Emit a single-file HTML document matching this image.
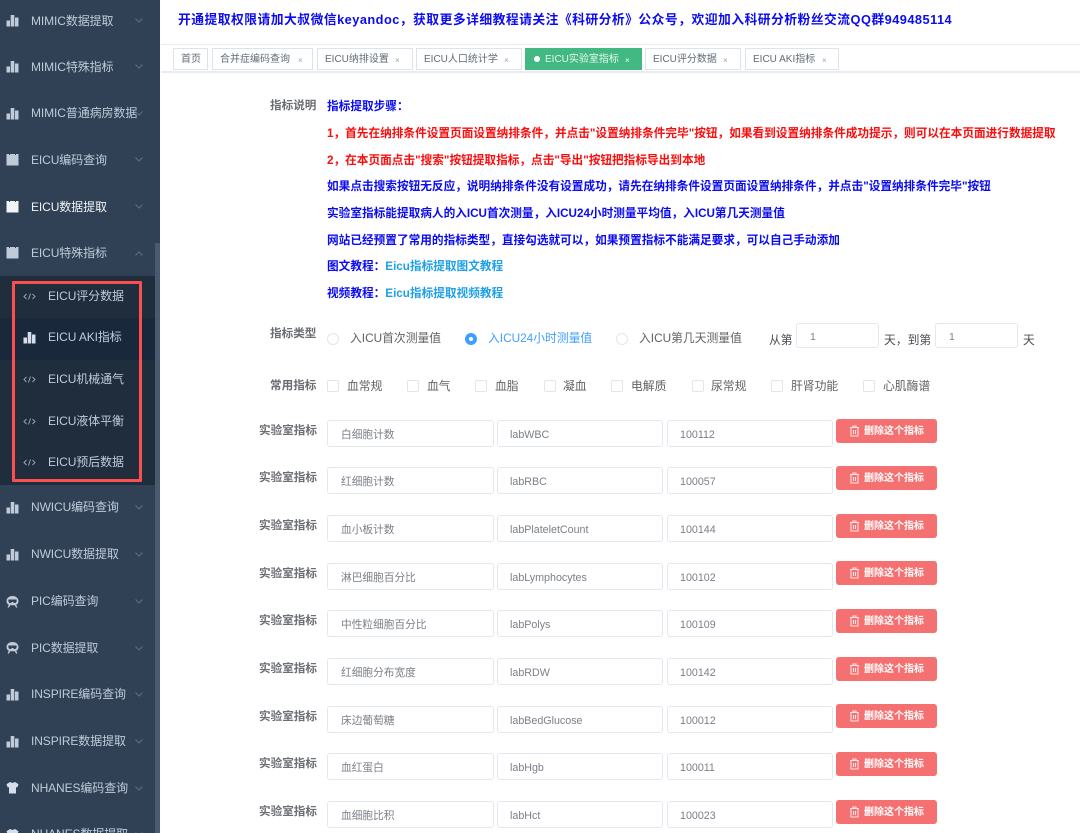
<!DOCTYPE html>
<html><head><meta charset="utf-8">
<style>
*{box-sizing:border-box;margin:0;padding:0}
html,body{width:1080px;height:833px;overflow:hidden;background:#fff;font-family:"Liberation Sans","Noto Sans CJK SC",sans-serif}
.a{position:absolute;white-space:nowrap}
#side{position:absolute;left:0;top:0;width:160px;height:833px;background:#304156;overflow:hidden}
#sub{position:absolute;left:0;top:276px;width:155px;height:209px;background:#1f2d3d}
#akirow{position:absolute;left:0;top:318px;width:155px;height:42px;background:#19283a}
#bar{position:absolute;left:155px;top:243px;width:5px;height:590px;background:#4a5a6e}
.m{position:absolute;left:31px;height:20px;line-height:20px;font-size:12px;color:#bfcbd9;white-space:nowrap;letter-spacing:-.1px}
.s{position:absolute;left:48px;height:20px;line-height:20px;font-size:12px;color:#bfcbd9;white-space:nowrap;letter-spacing:-.1px}
.ic{position:absolute;left:6px;width:13px;height:13px}
.ics{position:absolute;left:23px;width:13px;height:13px}
.ch{position:absolute;left:135px;width:8px;height:5px}
.tag{position:absolute;top:48px;height:22px;border:1px solid #dde3ec;background:#fff;color:#5f6b7a;font-size:10px;line-height:22px;white-space:nowrap;padding-left:7px}
.tag i{position:absolute;top:1px;font-style:normal;font-size:8px;color:#9aa3ad}
.lb{position:absolute;font-size:11.6px;font-weight:bold;color:#6b6e73;white-space:nowrap;height:16px;line-height:16px}
.l{position:absolute;left:327px;font-size:11.67px;font-weight:bold;white-space:nowrap;height:18px;line-height:18px}
.b{color:#0b0bf0}.r{color:#f90d0d}.k{color:#1e9fe8}
.in{position:absolute;height:27px;border:1px solid #e4e7ed;border-radius:3px;background:#fff;color:#7a7f87;font-size:10.7px;line-height:29px;padding-left:13px;white-space:nowrap}
.del{position:absolute;left:836px;width:101px;height:24px;background:#f56c6c;border-radius:3px;color:#fff;font-size:10px;font-weight:bold;line-height:26px;padding-left:28px;white-space:nowrap;opacity:.97}
.del svg{position:absolute;left:13px;top:6px;width:11px;height:12px}
.t{position:absolute;font-size:11.8px;color:#606266;white-space:nowrap;height:16px;line-height:16px}
.cb{position:absolute;top:380px;width:12px;height:12px;border:1px solid #e2e5ea;border-radius:2px;background:#fff}
.rd{position:absolute;top:333px;width:12px;height:12px;border:1px solid #e2e5ea;border-radius:50%;background:#fff}
</style></head><body>
<svg width="0" height="0" style="position:absolute">
<symbol id="bars" viewBox="0 0 13 13"><path fill="#bfcbd9" d="M.5 6.500h3.500v6H.5zM4.700 1h3.600v11.500H4.700zM9 3.500h3.500v9H9z"/></symbol>
<symbol id="barsw" viewBox="0 0 13 13"><path fill="#d5deea" d="M.5 6.500h3.500v6H.5zM4.700 1h3.600v11.500H4.700zM9 3.500h3.500v9H9z"/></symbol>
<symbol id="cal" viewBox="0 0 13 13"><path fill="#bfcbd9" d="M.5 1h2.500v1h1V1h5v1h1V1h2.500V12.500H.5z"/></symbol>
<symbol id="calw" viewBox="0 0 13 13"><path fill="#f2f4f7" d="M.5 1h2.500v1h1V1h5v1h1V1h2.500V12.500H.5z"/></symbol>
<symbol id="code" viewBox="0 0 13 13"><path fill="none" stroke="#94a2b3" stroke-width="1" d="M3.500 4L1 6.500 3.500 9M9.500 4L12 6.500 9.500 9M7.500 3.500l-2 6"/></symbol>
<symbol id="pic" viewBox="0 0 13 13"><path fill="#bfcbd9" d="M6.500 1C9.800 1 12.500 3 12.500 6c0 2-1 3.300-2.300 3.800L11.500 12.500H10L8.800 10.200H4.200L3 12.500H1.500l1.300-2.700C1.500 9.300.5 8 .5 6 .5 3 3.200 1 6.500 1z"/><path fill="#304156" d="M2.500 4.500h8c.4 1.500 0 3-1.200 3.500H8.300L6.500 6.800 4.700 8H3.700C2.500 7.500 2.100 6 2.500 4.500z"/></symbol>
<symbol id="shirt" viewBox="0 0 13 13"><path fill="#d5deea" d="M4 1l2.500 1L9 1l3.500 2.300L11.300 6.500l-1.300-.5V12.500H3V6l-1.300.5L.5 3.300z"/></symbol>
<symbol id="chev" viewBox="0 0 8 5"><path fill="none" stroke="#5f6e82" stroke-width="1" d="M.5.500L4 4 7.500.500"/></symbol>
<symbol id="chu" viewBox="0 0 8 5"><path fill="none" stroke="#5f6e82" stroke-width="1" d="M.5 4.500L4 1l3.500 3.500"/></symbol>
<symbol id="trash" viewBox="0 0 11 12"><path fill="none" stroke="#ffe3e3" stroke-width="1.100" d="M1 2.500h9M4 2.500V1h3v1.500M2 2.500V11h7V2.500M4.500 5v4M6.500 5v4"/></symbol>
</svg>

<div id="side">
<div id="sub"></div><div id="akirow"></div><div id="bar"></div>
<svg class="ic" style="top:14px"><use href="#bars"/></svg><div class="m" style="top:11px">MIMIC数据提取</div><svg class="ch" style="top:18px"><use href="#chev"/></svg>
<svg class="ic" style="top:60px"><use href="#bars"/></svg><div class="m" style="top:57px">MIMIC特殊指标</div><svg class="ch" style="top:64px"><use href="#chev"/></svg>
<svg class="ic" style="top:107px"><use href="#bars"/></svg><div class="m" style="top:103px">MIMIC普通病房数据</div><svg class="ch" style="top:111px"><use href="#chev"/></svg>
<svg class="ic" style="top:153px"><use href="#cal"/></svg><div class="m" style="top:150px">EICU编码查询</div><svg class="ch" style="top:157px"><use href="#chev"/></svg>
<svg class="ic" style="top:200px"><use href="#calw"/></svg><div class="m" style="top:197px;color:#f0f3f6">EICU数据提取</div><svg class="ch" style="top:204px"><use href="#chev"/></svg>
<svg class="ic" style="top:246px"><use href="#cal"/></svg><div class="m" style="top:243px">EICU特殊指标</div><svg class="ch" style="top:251px"><use href="#chu"/></svg>

<svg class="ics" style="top:290px"><use href="#code"/></svg><div class="s" style="top:286px">EICU评分数据</div>
<svg class="ics" style="top:331px"><use href="#barsw"/></svg><div class="s" style="top:327px">EICU AKI指标</div>
<svg class="ics" style="top:373px"><use href="#code"/></svg><div class="s" style="top:369px">EICU机械通气</div>
<svg class="ics" style="top:415px"><use href="#code"/></svg><div class="s" style="top:411px">EICU液体平衡</div>
<svg class="ics" style="top:456px"><use href="#code"/></svg><div class="s" style="top:452px">EICU预后数据</div>

<svg class="ic" style="top:501px"><use href="#bars"/></svg><div class="m" style="top:497px">NWICU编码查询</div><svg class="ch" style="top:505px"><use href="#chev"/></svg>
<svg class="ic" style="top:548px"><use href="#bars"/></svg><div class="m" style="top:544px">NWICU数据提取</div><svg class="ch" style="top:552px"><use href="#chev"/></svg>
<svg class="ic" style="top:595px"><use href="#pic"/></svg><div class="m" style="top:591px">PIC编码查询</div><svg class="ch" style="top:599px"><use href="#chev"/></svg>
<svg class="ic" style="top:641px"><use href="#pic"/></svg><div class="m" style="top:638px">PIC数据提取</div><svg class="ch" style="top:646px"><use href="#chev"/></svg>
<svg class="ic" style="top:688px"><use href="#bars"/></svg><div class="m" style="top:684px">INSPIRE编码查询</div><svg class="ch" style="top:692px"><use href="#chev"/></svg>
<svg class="ic" style="top:735px"><use href="#bars"/></svg><div class="m" style="top:731px">INSPIRE数据提取</div><svg class="ch" style="top:739px"><use href="#chev"/></svg>
<svg class="ic" style="top:781px"><use href="#shirt"/></svg><div class="m" style="top:778px">NHANES编码查询</div><svg class="ch" style="top:786px"><use href="#chev"/></svg>
<svg class="ic" style="top:828px"><use href="#shirt"/></svg><div class="m" style="top:824px">NHANES数据提取</div><svg class="ch" style="top:832px"><use href="#chev"/></svg>
</div>
<div class="a" style="left:12px;top:281px;width:130px;height:201px;border:3px solid #fb4f4f;border-radius:1px"></div>

<div class="a" style="left:178px;top:11px;font-size:12.8px;font-weight:bold;color:#0b0bf0;letter-spacing:.46px;height:18px;line-height:18px">开通提取权限请加大叔微信keyandoc，获取更多详细教程请关注《科研分析》公众号，欢迎加入科研分析粉丝交流QQ群949485114</div>
<div class="a" style="left:161px;top:44px;width:919px;height:1px;background:#e8ebf0"></div>
<div class="a" style="left:161px;top:71px;width:919px;height:2px;background:#e8ebf0"></div>

<div class="tag" style="left:173px;width:35px">首页</div>
<div class="tag" style="left:212px;width:101px">合并症编码查询<i style="left:85px">×</i></div>
<div class="tag" style="left:317px;width:96px">EICU纳排设置<i style="left:77px">×</i></div>
<div class="tag" style="left:416px;width:106px">EICU人口统计学<i style="left:87px">×</i></div>
<div class="tag" style="left:525px;width:117px;background:#42b983;border-color:#42b983;color:#e8f7f0;padding-left:19px"><span class="a" style="left:8px;top:7px;width:6px;height:6px;border-radius:50%;background:#fff"></span>EICU实验室指标<i style="left:99px;color:#fff">×</i></div>
<div class="tag" style="left:645px;width:96px">EICU评分数据<i style="left:77px">×</i></div>
<div class="tag" style="left:745px;width:94px">EICU AKI指标<i style="left:76px">×</i></div>

<div class="lb" style="left:270px;top:98px">指标说明</div>
<div class="l b" style="top:98px">指标提取步骤：</div>
<div class="l r" style="top:125px">1，首先在纳排条件设置页面设置纳排条件，并点击"设置纳排条件完毕"按钮，如果看到设置纳排条件成功提示，则可以在本页面进行数据提取</div>
<div class="l r" style="top:152px">2，在本页面点击"搜索"按钮提取指标，点击"导出"按钮把指标导出到本地</div>
<div class="l b" style="top:178px">如果点击搜索按钮无反应，说明纳排条件没有设置成功，请先在纳排条件设置页面设置纳排条件，并点击"设置纳排条件完毕"按钮</div>
<div class="l b" style="top:205px">实验室指标能提取病人的入ICU首次测量，入ICU24小时测量平均值，入ICU第几天测量值</div>
<div class="l b" style="top:232px">网站已经预置了常用的指标类型，直接勾选就可以，如果预置指标不能满足要求，可以自己手动添加</div>
<div class="l b" style="top:258px">图文教程：<span class="k">Eicu指标提取图文教程</span></div>
<div class="l b" style="top:285px">视频教程：<span class="k">Eicu指标提取视频教程</span></div>

<div class="lb" style="left:270px;top:326px">指标类型</div>
<div class="rd" style="left:327px"></div><div class="t" style="left:350px;top:330px">入ICU首次测量值</div>
<div class="rd" style="left:465px;border:4px solid #409eff"></div><div class="t" style="left:488px;top:330px;color:#409eff">入ICU24小时测量值</div>
<div class="rd" style="left:616px"></div><div class="t" style="left:639px;top:330px">入ICU第几天测量值</div>
<div class="t" style="left:769px;top:332px;color:#4a4d52">从第</div>
<div class="in" style="left:796px;top:323px;width:83px;height:25px;line-height:26px;font-size:10.5px;padding-left:13px">1</div>
<div class="t" style="left:884px;top:332px;color:#4a4d52">天，到第</div>
<div class="in" style="left:935px;top:323px;width:83px;height:25px;line-height:26px;font-size:10.5px;padding-left:13px">1</div>
<div class="t" style="left:1023px;top:332px;color:#4a4d52">天</div>

<div class="lb" style="left:270px;top:378px">常用指标</div>
<div class="cb" style="left:327px"></div><div class="t" style="left:347px;top:378px">血常规</div>
<div class="cb" style="left:407px"></div><div class="t" style="left:427px;top:378px">血气</div>
<div class="cb" style="left:475px"></div><div class="t" style="left:495px;top:378px">血脂</div>
<div class="cb" style="left:544px"></div><div class="t" style="left:563px;top:378px">凝血</div>
<div class="cb" style="left:611px"></div><div class="t" style="left:631px;top:378px">电解质</div>
<div class="cb" style="left:692px"></div><div class="t" style="left:711px;top:378px">尿常规</div>
<div class="cb" style="left:771px"></div><div class="t" style="left:791px;top:378px">肝肾功能</div>
<div class="cb" style="left:863px"></div><div class="t" style="left:883px;top:378px">心肌酶谱</div>

<div class="lb" style="left:259px;top:423px">实验室指标</div>
<div class="in" style="left:327px;top:420px;width:167px">白细胞计数</div><div class="in" style="left:497px;top:420px;width:166px;padding-left:12px">labWBC</div><div class="in" style="left:667px;top:420px;width:166px;padding-left:12px">100112</div>
<div class="del" style="top:419px"><svg><use href="#trash"/></svg>删除这个指标</div>

<div class="lb" style="left:259px;top:470px">实验室指标</div>
<div class="in" style="left:327px;top:467px;width:167px">红细胞计数</div><div class="in" style="left:497px;top:467px;width:166px;padding-left:12px">labRBC</div><div class="in" style="left:667px;top:467px;width:166px;padding-left:12px">100057</div>
<div class="del" style="top:466px"><svg><use href="#trash"/></svg>删除这个指标</div>

<div class="lb" style="left:259px;top:518px">实验室指标</div>
<div class="in" style="left:327px;top:515px;width:167px">血小板计数</div><div class="in" style="left:497px;top:515px;width:166px;padding-left:12px">labPlateletCount</div><div class="in" style="left:667px;top:515px;width:166px;padding-left:12px">100144</div>
<div class="del" style="top:514px"><svg><use href="#trash"/></svg>删除这个指标</div>

<div class="lb" style="left:259px;top:566px">实验室指标</div>
<div class="in" style="left:327px;top:563px;width:167px">淋巴细胞百分比</div><div class="in" style="left:497px;top:563px;width:166px;padding-left:12px">labLymphocytes</div><div class="in" style="left:667px;top:563px;width:166px;padding-left:12px">100102</div>
<div class="del" style="top:561px"><svg><use href="#trash"/></svg>删除这个指标</div>

<div class="lb" style="left:259px;top:613px">实验室指标</div>
<div class="in" style="left:327px;top:610px;width:167px">中性粒细胞百分比</div><div class="in" style="left:497px;top:610px;width:166px;padding-left:12px">labPolys</div><div class="in" style="left:667px;top:610px;width:166px;padding-left:12px">100109</div>
<div class="del" style="top:609px"><svg><use href="#trash"/></svg>删除这个指标</div>

<div class="lb" style="left:259px;top:661px">实验室指标</div>
<div class="in" style="left:327px;top:658px;width:167px">红细胞分布宽度</div><div class="in" style="left:497px;top:658px;width:166px;padding-left:12px">labRDW</div><div class="in" style="left:667px;top:658px;width:166px;padding-left:12px">100142</div>
<div class="del" style="top:657px"><svg><use href="#trash"/></svg>删除这个指标</div>

<div class="lb" style="left:259px;top:709px">实验室指标</div>
<div class="in" style="left:327px;top:706px;width:167px">床边葡萄糖</div><div class="in" style="left:497px;top:706px;width:166px;padding-left:12px">labBedGlucose</div><div class="in" style="left:667px;top:706px;width:166px;padding-left:12px">100012</div>
<div class="del" style="top:704px"><svg><use href="#trash"/></svg>删除这个指标</div>

<div class="lb" style="left:259px;top:756px">实验室指标</div>
<div class="in" style="left:327px;top:753px;width:167px">血红蛋白</div><div class="in" style="left:497px;top:753px;width:166px;padding-left:12px">labHgb</div><div class="in" style="left:667px;top:753px;width:166px;padding-left:12px">100011</div>
<div class="del" style="top:752px"><svg><use href="#trash"/></svg>删除这个指标</div>

<div class="lb" style="left:259px;top:804px">实验室指标</div>
<div class="in" style="left:327px;top:801px;width:167px">血细胞比积</div><div class="in" style="left:497px;top:801px;width:166px;padding-left:12px">labHct</div><div class="in" style="left:667px;top:801px;width:166px;padding-left:12px">100023</div>
<div class="del" style="top:800px"><svg><use href="#trash"/></svg>删除这个指标</div>
</body></html>
